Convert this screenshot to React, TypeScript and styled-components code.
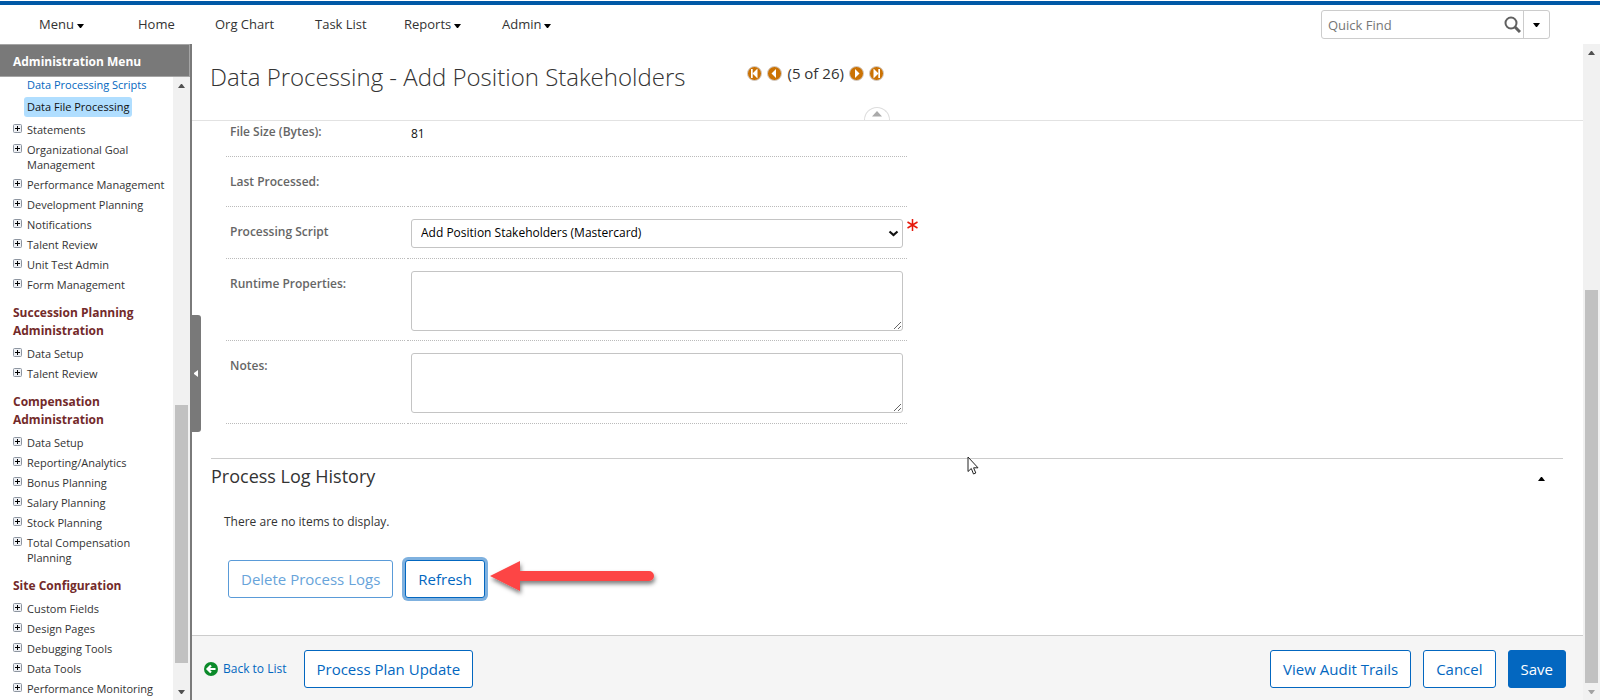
import React from 'react';
import styled, { createGlobalStyle } from 'styled-components';

const blue = '#0367c0';

const GlobalStyle = createGlobalStyle`
  * { box-sizing: border-box; }
  body {
    margin: 0;
    background: #fff;
    color: #333;
    font-family: 'Open Sans', 'Noto Sans', sans-serif;
    font-size: 12px;
  }
  h1, h2, h3, p, ul { margin: 0; padding: 0; }
  ul { list-style: none; }
  button, input, select, textarea { font-family: inherit; }
  a { text-decoration: none; }
`;

const Page = styled.div`
  display: flex;
  flex-direction: column;
  height: 100vh;
  overflow: hidden;
  padding-top: 1px;
`;

const TopBar = styled.header`
  display: flex;
  align-items: center;
  flex: none;
  height: 43px;
  border-top: 4px solid #0058a6;
  padding: 0 50px 0 39px;
`;

const Nav = styled.nav`
  display: flex;
  flex: 1;
  padding-bottom: 1px;
`;

const NavLink = styled.a<{ $width: number }>`
  display: flex;
  align-items: center;
  gap: 3px;
  width: ${(p) => p.$width}px;
  color: #333;
  font-size: 13px;
  line-height: 20px;
  svg { margin-top: 4px; }
`;

const Search = styled.form`
  display: flex;
  width: 229px;
  height: 29px;
  border: 1px solid #ccc;
  border-radius: 3px;
`;

const SearchInput = styled.input`
  flex: 1;
  min-width: 0;
  border: 0;
  padding: 0 6px;
  background: transparent;
  font-size: 13px;
  outline: none;
  &::placeholder { color: #767676; }
`;

const SearchButton = styled.button<{ $divided?: boolean }>`
  display: flex;
  align-items: center;
  justify-content: center;
  width: ${(p) => (p.$divided ? 26 : 22)}px;
  border: 0;
  border-left: ${(p) => (p.$divided ? '1px solid #ccc' : '0')};
  padding: 0;
  background: transparent;
`;

const Body = styled.div`
  display: flex;
  flex: 1;
  min-height: 0;
`;

const Sidebar = styled.aside`
  position: relative;
  display: flex;
  flex-direction: column;
  flex: none;
  width: 192px;
  border-right: 2px solid #7a7a7a;
`;

const SidebarTitle = styled.h2`
  flex: none;
  height: 33px;
  border: solid #a5a5a5;
  border-width: 1px 1px 1px 0;
  padding-left: 13px;
  background: #797979;
  color: #fff;
  font-size: 12px;
  font-weight: 700;
  line-height: 33px;
`;

const SidebarBody = styled.div`
  display: flex;
  flex: 1;
  min-height: 0;
`;

const Tree = styled.div`
  flex: 1;
  overflow: hidden;
  padding-left: 13px;
`;

const TreeLink = styled.a<{ $active?: boolean }>`
  display: block;
  width: max-content;
  margin: ${(p) => (p.$active ? '4px 0 2px 11px' : '0 0 0 14px')};
  border-radius: 3px;
  padding: ${(p) => (p.$active ? '2px 3px' : '0')};
  background: ${(p) => (p.$active ? '#b0deff' : 'transparent')};
  color: ${(p) => (p.$active ? '#111' : blue)};
  font-size: 11px;
  line-height: 16px;
`;

const TreeHeading = styled.h3`
  margin: 10px 0 3px;
  width: 140px;
  color: #732a2a;
  font-size: 12px;
  font-weight: 700;
  line-height: 18px;
`;

const TreeItem = styled.li`
  display: flex;
  align-items: flex-start;
  gap: 5px;
  padding: 3px 0 2px;
  font-size: 11px;
  line-height: 15px;
`;

const TreeLabel = styled.a`
  color: #333;
  max-width: 144px;
`;

const Expander = styled.button`
  flex: none;
  width: 9px;
  height: 9px;
  margin-top: 2px;
  border: 0;
  padding: 0;
  background: transparent;
  line-height: 0;
`;

const CollapseHandle = styled.button`
  position: absolute;
  top: 271px;
  left: 190px;
  z-index: 2;
  display: flex;
  align-items: center;
  justify-content: center;
  width: 11px;
  height: 117px;
  border: 0;
  border-radius: 0 3px 3px 0;
  padding: 0;
  background: #797979;
`;

const Rail = styled.div`
  display: flex;
  flex-direction: column;
  align-items: center;
  flex: none;
  width: 17px;
  background: #f1f1f1;
`;

const RailArrow = styled.span`
  display: flex;
  align-items: center;
  justify-content: center;
  flex: none;
  height: 17px;
`;

const RailSpace = styled.div<{ $share: number }>`
  flex: ${(p) => p.$share} 0 0;
`;

const RailThumb = styled(RailSpace)`
  width: 13px;
  background: #c1c1c1;
`;

const Main = styled.main`
  display: flex;
  flex-direction: column;
  flex: 1;
  min-width: 0;
`;

const PageHead = styled.div`
  position: relative;
  display: flex;
  align-items: flex-start;
  gap: 62px;
  flex: none;
  height: 77px;
  border-bottom: 1px solid #e2e2e2;
  padding: 16px 0 0 18px;
`;

const Title = styled.h1`
  color: #333;
  font-size: 24px;
  font-weight: 300;
  line-height: 34px;
  white-space: nowrap;
`;

const Pager = styled.div`
  display: flex;
  align-items: center;
  gap: 5px;
  padding-top: 3px;
  font-size: 15px;
  line-height: 20px;
`;

const IconButton = styled.button`
  display: flex;
  border: 0;
  padding: 0;
  background: transparent;
`;

const SectionToggle = styled(IconButton)`
  padding-top: 6px;
`;

const HeadTab = styled.button`
  position: absolute;
  bottom: 0;
  left: 50%;
  display: flex;
  justify-content: center;
  width: 26px;
  height: 13px;
  margin-left: -24px;
  border: 1px solid #ddd;
  border-bottom: 0;
  border-radius: 13px 13px 0 0;
  padding: 3px 0 0;
  background: #fff;
`;

const Scroll = styled.div`
  flex: 1;
  min-height: 0;
  overflow: hidden;
  padding: 0 20px 0 19px;
`;

const Fields = styled.div`
  width: 681px;
  margin-left: 15px;
`;

const Field = styled.div<{ $height: number }>`
  display: grid;
  grid-template-columns: 179px 1fr;
  column-gap: 2px;
  height: ${(p) => p.$height}px;
`;

const LabelCell = styled.label`
  border-bottom: 1px dotted #bbb;
  padding: 15px 0 0 4px;
  color: #666;
  font-size: 12px;
  font-weight: 600;
  line-height: 20px;
`;

const TopLabelCell = styled(LabelCell)`
  padding-top: 1px;
`;

const ValueCell = styled.div`
  position: relative;
  border-bottom: 1px dotted #bbb;
  padding: 12px 4px 0;
  color: #111;
  line-height: 20px;
`;

const TopValueCell = styled(ValueCell)`
  padding-top: 3px;
`;

const SelectWrap = styled.div`
  position: relative;
  display: flex;
  align-items: center;
`;

const Select = styled.select`
  appearance: none;
  width: 100%;
  height: 29px;
  border: 1px solid #c4c4c4;
  border-radius: 3px;
  padding: 0 24px 2px 9px;
  background: #fff;
  color: #000;
  font-size: 12px;
`;

const SelectMark = styled.span`
  position: absolute;
  right: 4px;
  display: flex;
  pointer-events: none;
`;

const Required = styled.span`
  position: absolute;
  top: 12px;
  left: 100%;
  display: flex;
`;

const TextArea = styled.textarea`
  display: block;
  width: 100%;
  height: 60px;
  border: 1px solid #c4c4c4;
  border-radius: 3px;
  background: #fff;
  resize: vertical;
`;

const Section = styled.section`
  margin-top: 34px;
  border-top: 1px solid #ccc;
`;

const SectionHead = styled.div`
  display: flex;
  align-items: center;
  justify-content: space-between;
  padding: 4px 18px 0 0;
`;

const SectionTitle = styled.h2`
  color: #333;
  font-size: 18px;
  font-weight: 400;
  line-height: 26px;
`;

const Empty = styled.p`
  padding: 23px 0 0 13px;
  line-height: 20px;
`;

const Actions = styled.div`
  display: flex;
  align-items: center;
  gap: 12px;
  padding: 24px 0 0 17px;
`;

const Button = styled.button<{ $primary?: boolean; $focused?: boolean }>`
  height: 38px;
  border: 1px solid ${blue};
  border-radius: 3px;
  padding: 0 12px;
  background: ${(p) => (p.$primary ? blue : '#fff')};
  color: ${(p) => (p.$primary ? '#fff' : blue)};
  font-size: 15px;
  white-space: nowrap;
  box-shadow: ${(p) => (p.$focused ? '0 0 0 3px #7fb1df' : 'none')};
  &:disabled { border-color: #5a9bd8; color: #68a4da; }
`;

const ArrowNote = styled.svg`
  margin-left: -8px;
`;

const Footer = styled.footer`
  display: flex;
  align-items: center;
  flex: none;
  gap: 12px;
  height: 65px;
  border-top: 1px solid #ccc;
  padding: 1px 17px 0 12px;
  background: #f5f5f5;
`;

const BackLink = styled.a`
  display: flex;
  align-items: center;
  gap: 5px;
  margin-right: 5px;
  color: ${blue};
  font-size: 12px;
`;

const Spacer = styled.div`
  flex: 1;
`;

const Cursor = styled.svg`
  position: absolute;
  top: 456px;
  left: 967px;
`;

type Direction = 'up' | 'down' | 'left';

const shapes: Record<Direction, string> = {
  up: '0,4 7,4 4,0 3,0',
  down: '0,0 7,0 4,4 3,4',
  left: '4,0 4,7 0,4 0,3',
};

function Caret({ dir = 'down', color = '#000' }: { dir?: Direction; color?: string }) {
  const [w, h] = dir === 'left' ? [4, 7] : [7, 4];
  return (
    <svg width={w} height={h} viewBox={`0 0 ${w} ${h}`} aria-hidden="true">
      <polygon points={shapes[dir]} fill={color} />
    </svg>
  );
}

function ScrollRail({ before, thumb, after, muted }: { before: number; thumb: number; after: number; muted?: boolean }) {
  return (
    <Rail aria-hidden="true">
      <RailArrow><Caret dir="up" color="#505050" /></RailArrow>
      <RailSpace $share={before} />
      <RailThumb $share={thumb} />
      <RailSpace $share={after} />
      <RailArrow><Caret color={muted ? '#a3a3a3' : '#505050'} /></RailArrow>
    </Rail>
  );
}

function PagerIcon({ flip, end }: { flip?: boolean; end?: boolean }) {
  return (
    <svg width="15" height="15" viewBox="0 0 15 15" aria-hidden="true">
      <circle cx="7.5" cy="7.5" r="7" fill="#cb7203" stroke="#d3cdca" />
      <g transform={flip ? 'translate(15 0) scale(-1 1)' : undefined} fill="#fff">
        <path d={end ? 'M10.500 2.500v10L5.500 7.500z' : 'M9 3v9L4.500 7.500z'} />
        {end && <path d="M4 3h1.700v9H4z" />}
      </g>
    </svg>
  );
}

const trees: { heading?: string; items: string[] }[] = [
  {
    items: [
      'Statements', 'Organizational Goal Management', 'Performance Management', 'Development Planning',
      'Notifications', 'Talent Review', 'Unit Test Admin', 'Form Management',
    ],
  },
  { heading: 'Succession Planning Administration', items: ['Data Setup', 'Talent Review'] },
  {
    heading: 'Compensation Administration',
    items: ['Data Setup', 'Reporting/Analytics', 'Bonus Planning', 'Salary Planning', 'Stock Planning', 'Total Compensation Planning'],
  },
  {
    heading: 'Site Configuration',
    items: ['Custom Fields', 'Design Pages', 'Debugging Tools', 'Data Tools', 'Performance Monitoring'],
  },
];

const navItems = [
  { label: 'Menu', width: 99, menu: true },
  { label: 'Home', width: 77 },
  { label: 'Org Chart', width: 100 },
  { label: 'Task List', width: 89 },
  { label: 'Reports', width: 98, menu: true },
  { label: 'Admin', width: 60, menu: true },
];

export default function App() {
  return (
    <>
      <GlobalStyle />
      <Page>
        <TopBar>
          <Nav>
            {navItems.map((n) => (
              <NavLink key={n.label} href="#" $width={n.width}>
                {n.label}
                {n.menu && <Caret />}
              </NavLink>
            ))}
          </Nav>
          <Search>
            <SearchInput aria-label="Quick Find" placeholder="Quick Find" />
            <SearchButton type="button" aria-label="Search">
              <svg width="17" height="17" viewBox="0 0 17 17" fill="none" stroke="#606060">
                <circle cx="7" cy="7" r="5.500" strokeWidth="2" />
                <path d="M11 11l5 5" strokeWidth="3" />
              </svg>
            </SearchButton>
            <SearchButton type="button" aria-label="Search options" $divided><Caret /></SearchButton>
          </Search>
        </TopBar>
        <Body>
          <Sidebar>
            <SidebarTitle>Administration Menu</SidebarTitle>
            <SidebarBody>
              <Tree>
                <TreeLink href="#">Data Processing Scripts</TreeLink>
                <TreeLink href="#" $active>Data File Processing</TreeLink>
                {trees.map((t, i) => (
                  <React.Fragment key={i}>
                    {t.heading && <TreeHeading>{t.heading}</TreeHeading>}
                    <ul>
                      {t.items.map((item) => (
                        <TreeItem key={item}>
                          <Expander type="button" aria-label={`Expand ${item}`}>
                            <svg width="9" height="9" viewBox="0 0 9 9">
                              <rect x="0.500" y="0.500" width="8" height="8" rx="1" fill="#eef0f4" stroke="#8d95a0" />
                              <path d="M2 4.500h5M4.500 2v5" stroke="#000" />
                            </svg>
                          </Expander>
                          <TreeLabel href="#">{item}</TreeLabel>
                        </TreeItem>
                      ))}
                    </ul>
                  </React.Fragment>
                ))}
              </Tree>
              <ScrollRail before={312} thumb={258} after={20} />
            </SidebarBody>
            <CollapseHandle type="button" aria-label="Collapse menu"><Caret dir="left" color="#fff" /></CollapseHandle>
          </Sidebar>
          <Main>
            <PageHead>
              <Title>Data Processing - Add Position Stakeholders</Title>
              <Pager>
                <IconButton type="button" aria-label="First"><PagerIcon end /></IconButton>
                <IconButton type="button" aria-label="Previous"><PagerIcon /></IconButton>
                <span>(5 of 26)</span>
                <IconButton type="button" aria-label="Next"><PagerIcon flip /></IconButton>
                <IconButton type="button" aria-label="Last"><PagerIcon end flip /></IconButton>
              </Pager>
              <HeadTab type="button" aria-label="Collapse header">
                <svg width="10" height="6" viewBox="0 0 10 6"><path d="M0 5.500L5 0l5 5.500z" fill="#aaa" /></svg>
              </HeadTab>
            </PageHead>
            <Scroll>
              <Fields>
                <Field $height={36}>
                  <TopLabelCell as="span">File Size (Bytes):</TopLabelCell>
                  <TopValueCell>81</TopValueCell>
                </Field>
                <Field $height={50}>
                  <LabelCell as="span">Last Processed:</LabelCell>
                  <ValueCell />
                </Field>
                <Field $height={52}>
                  <LabelCell htmlFor="script">Processing Script</LabelCell>
                  <ValueCell>
                    <SelectWrap>
                      <Select id="script">
                        <option>Add Position Stakeholders (Mastercard)</option>
                      </Select>
                      <SelectMark>
                        <svg width="11" height="7" viewBox="0 0 11 7"><path d="M1.500 1.500l4 3.500 4-3.500" fill="none" stroke="#111" strokeWidth="2.200" /></svg>
                      </SelectMark>
                    </SelectWrap>
                    <Required aria-label="required">
                      <svg width="11" height="12" viewBox="0 0 11 12"><path d="M5.500 0v12M0.500 3l10 6M10.500 3l-10 6" stroke="#e51a0c" strokeWidth="1.500" /></svg>
                    </Required>
                  </ValueCell>
                </Field>
                <Field $height={82}>
                  <LabelCell htmlFor="props">Runtime Properties:</LabelCell>
                  <ValueCell><TextArea id="props" /></ValueCell>
                </Field>
                <Field $height={83}>
                  <LabelCell htmlFor="notes">Notes:</LabelCell>
                  <ValueCell><TextArea id="notes" /></ValueCell>
                </Field>
              </Fields>
              <Section>
                <SectionHead>
                  <SectionTitle>Process Log History</SectionTitle>
                  <SectionToggle type="button" aria-label="Collapse section"><Caret dir="up" /></SectionToggle>
                </SectionHead>
                <Empty>There are no items to display.</Empty>
                <Actions>
                  <Button type="button" disabled>Delete Process Logs</Button>
                  <Button type="button" $focused>Refresh</Button>
                  <ArrowNote width="176" height="46" viewBox="0 0 176 46" aria-hidden="true">
                    <defs>
                      <filter id="shade" x="-10%" y="-30%" width="120%" height="180%">
                        <feDropShadow dx="1" dy="3" stdDeviation="2" floodOpacity="0.500" />
                      </filter>
                    </defs>
                    <path d="M1 20L31 5v10h129a5 5 0 0 1 0 10H31v10z" fill="#fd4444" filter="url(#shade)" />
                  </ArrowNote>
                </Actions>
              </Section>
            </Scroll>
            <Footer>
              <BackLink href="#">
                <svg width="14" height="14" viewBox="0 0 14 14" aria-hidden="true">
                  <circle cx="7" cy="7" r="7" fill="#0b8a2a" />
                  <path d="M11.500 7H4M7 3.500L3.500 7 7 10.500" fill="none" stroke="#fff" strokeWidth="2.200" />
                </svg>
                Back to List
              </BackLink>
              <Button type="button">Process Plan Update</Button>
              <Spacer />
              <Button type="button">View Audit Trails</Button>
              <Button type="button">Cancel</Button>
              <Button type="button" $primary>Save</Button>
            </Footer>
          </Main>
          <ScrollRail before={229} thumb={393} after={0} muted />
        </Body>
        <Cursor width="12" height="20" viewBox="0 0 12 20" aria-hidden="true">
          <path d="M1 1v14.500l3.300-3 2.200 5.500 2.300-1-2.200-5.200H11z" fill="#fff" stroke="#222" />
        </Cursor>
      </Page>
    </>
  );
}
